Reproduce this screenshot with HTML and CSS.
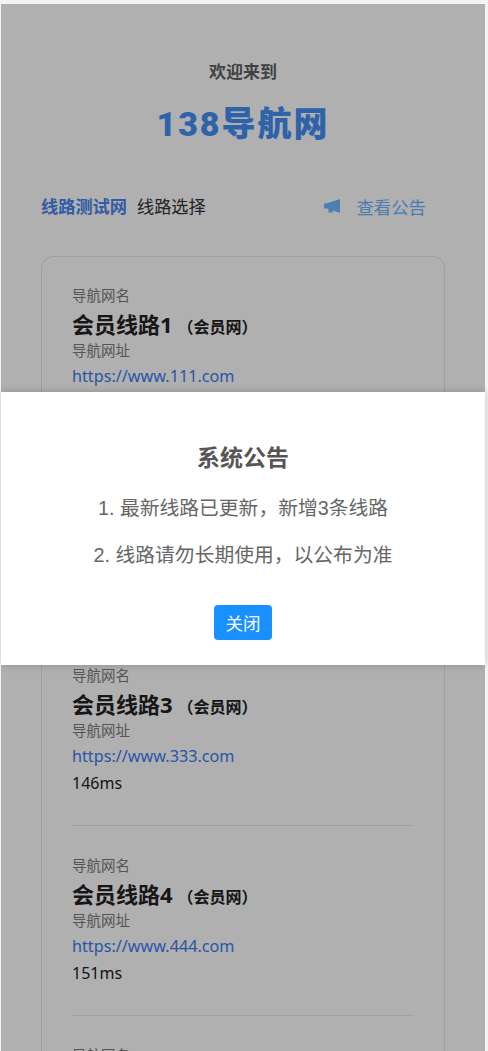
FILE: index.html
```html
<!DOCTYPE html>
<html lang="en">
<head>
  <meta charset="UTF-8" />
  <meta name="viewport" content="width=device-width, initial-scale=1.0"/>
  <title>138导航网</title>
  <link rel="stylesheet" href="styles.css">
</head>
<body>

  <div class="page">
    <div class="welcome">欢迎来到</div>
    <div class="logo">138导航网</div>

    <div class="tabs">
      <span class="tab-active">线路测试网</span>
      <span class="tab">线路选择</span>
      <a class="notice-link">
        <svg class="notice-icon" viewBox="0 0 16 14" width="16" height="14">
          <path d="M0 4.4 3 4.2 15.4.2h.6v13.6h-.6L9 11.4 8.6 13.6 4.6 13.4 4.4 9.9 3 9.6 0 9.4z" fill="#6cb9ff"/>
        </svg>
        <span>查看公告</span>
      </a>
    </div>

    <div class="card">
      <div class="line-item">
        <div class="label">导航网名</div>
        <div class="name">会员线路1<small>（会员网）</small></div>
        <div class="label">导航网址</div>
        <a class="url">https://www.111.com</a>
        <div class="speed">132ms</div>
      </div>
      <div class="line-item">
        <div class="label">导航网名</div>
        <div class="name">会员线路2<small>（会员网）</small></div>
        <div class="label">导航网址</div>
        <a class="url">https://www.222.com</a>
        <div class="speed">140ms</div>
      </div>
      <div class="line-item">
        <div class="label">导航网名</div>
        <div class="name">会员线路3<small>（会员网）</small></div>
        <div class="label">导航网址</div>
        <a class="url">https://www.333.com</a>
        <div class="speed">146ms</div>
      </div>
      <div class="line-item">
        <div class="label">导航网名</div>
        <div class="name">会员线路4<small>（会员网）</small></div>
        <div class="label">导航网址</div>
        <a class="url">https://www.444.com</a>
        <div class="speed">151ms</div>
      </div>
      <div class="line-item">
        <div class="label">导航网名</div>
      </div>
    </div>
  </div>

  <!-- Notice popup -->
  <div class="overlay">
    <div class="dialog">
      <h2>系统公告</h2>
      <p>1. 最新线路已更新，新增3条线路</p>
      <p>2. 线路请勿长期使用，以公布为准</p>
      <button class="close-btn">关闭</button>
    </div>
  </div>

</body>
</html>
```

FILE: styles.css
```css
html, body {
  margin: 0;
  height: 100%;
  overflow: hidden;
}

body {
  font-family: "Noto Sans", "Noto Sans CJK SC", sans-serif;
  background-color: #f3f3f3;
  padding: 4px 3px 0 1px;
  box-sizing: border-box;
  position: relative;
}

.page {
  background: white;
  height: 100%;
  padding: 0 40px;
  overflow: hidden;
}

.welcome {
  margin-top: 56px;
  text-align: center;
  font-size: 17px;
  line-height: 24px;
  font-weight: bold;
  color: #5f5f5f;
}

.logo {
  margin-top: 15px;
  text-align: center;
  font-family: Roboto, "Noto Sans CJK SC", sans-serif;
  font-size: 34px;
  line-height: 50px;
  font-weight: 900;
  color: #4390f5;
  letter-spacing: 2px;
}

.tabs {
  display: flex;
  align-items: center;
  margin-top: 41px;
  height: 30px;
  font-size: 17.2px;
}

.tab-active {
  font-weight: bold;
  color: #4a85f0;
}

.tab {
  margin-left: 10px;
  color: #333;
}

.notice-link {
  display: flex;
  align-items: center;
  margin-left: auto;
  margin-right: 19px;
  padding-top: 2px;
  font-size: 17.4px;
  color: #6cb4ff;
}

.notice-icon {
  margin-right: 16px;
}

.card {
  margin-top: 36px;
  border: 1px solid #e6e6e6;
  border-radius: 12px;
  padding: 0 30px;
}

.line-item {
  height: 158px;
  padding-top: 31px;
  border-bottom: 1px solid #e8e8e8;
}

.line-item:first-child {
  padding-top: 30px;
}

.label {
  font-size: 14.5px;
  line-height: 16px;
  color: #7c7c7c;
}

.name {
  font-size: 22px;
  line-height: 30px;
  font-weight: bold;
  color: #222;
  margin-top: 6px;
}

.name small {
  font-size: 16px;
  margin-left: 5px;
}

.url {
  display: block;
  font-size: 16.2px;
  line-height: 36px;
  color: #3a7cf0;
}

.speed {
  font-size: 16px;
  line-height: 18px;
  color: #222;
}

.overlay {
  position: absolute;
  top: 4px;
  left: 1px;
  right: 3px;
  bottom: 0;
  padding-top: 2px;
  background: rgba(0,0,0,0.31);
  display: flex;
  align-items: center;
}

.dialog {
  width: 100%;
  height: 273px;
  box-sizing: border-box;
  background: white;
  text-align: center;
  font-family: "Liberation Sans", "Noto Sans CJK SC", sans-serif;
  color: #666;
  padding-top: 50px;
  box-shadow: 0 0 8px rgba(0,0,0,0.2);
}

.dialog h2 {
  margin: 0;
  font-size: 23px;
  line-height: 32px;
  color: #555;
}

.dialog p {
  margin: 19px 0 0;
  font-size: 19.8px;
  line-height: 30px;
}

.dialog p + p {
  margin-top: 17px;
}

.close-btn {
  display: block;
  margin: 35px auto 0;
  width: 58px;
  height: 35px;
  padding: 0;
  border: none;
  border-radius: 4px;
  background-color: #1890ff;
  color: white;
  font-family: inherit;
  font-size: 17.5px;
}
```
